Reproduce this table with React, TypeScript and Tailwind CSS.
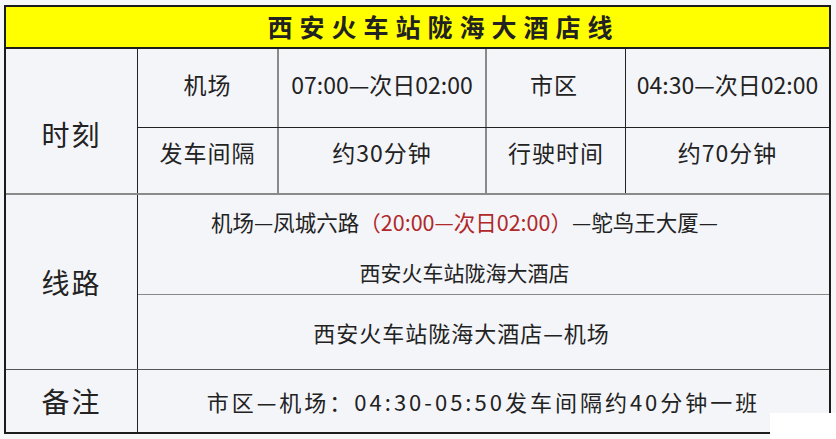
import React from 'react'

const font = { fontFamily: '"Noto Sans CJK SC", "Noto Sans", sans-serif' }

export default function App() {
  return (
    <div className="relative h-[439px] w-[836px] overflow-hidden bg-[#f6f7f9] text-[#222]" style={font}>
      <div className="pl-[4px] pt-[5px]">
        <div className="w-[827px] border-2 border-[#1c1c1c] bg-[#f4f5f9]">
          {/* title */}
          <div className="flex h-[42px] items-center justify-center border-b-2 border-[#1c1c1c] bg-[#ffff00] pl-[52px] text-[25px] font-bold tracking-[7px]">
            西安火车站陇海大酒店线
          </div>

          {/* 时刻 */}
          <div className="flex h-[146px] border-b-2 border-[#8a8a8a]">
            <div className="flex w-[132px] items-center justify-center border-r border-[#222] pt-[26px] text-[28px] tracking-[2px]">
              时刻
            </div>
            <div className="flex flex-1 flex-col">
              <div className="flex h-[79px] border-b border-[#222] text-[23px]">
                <div className="flex w-[141px] items-center justify-center border-r-2 border-[#8a8a8a] pb-[7px] tracking-[1px]">机场</div>
                <div className="flex w-[208px] items-center justify-center border-r-2 border-[#8a8a8a] pb-[7px]">07:00—次日02:00</div>
                <div className="flex w-[139px] items-center justify-center border-r border-[#222] pb-[7px] pr-[4px] tracking-[1px]">市区</div>
                <div className="flex flex-1 items-center justify-center pb-[7px]">04:30—次日02:00</div>
              </div>
              <div className="flex flex-1 text-[23px]">
                <div className="flex w-[141px] items-center justify-center border-r-2 border-[#8a8a8a] pb-[16px] tracking-[1px]">发车间隔</div>
                <div className="flex w-[208px] items-center justify-center border-r-2 border-[#8a8a8a] pb-[16px] tracking-[1px]">约30分钟</div>
                <div className="flex w-[139px] items-center justify-center border-r border-[#222] pb-[16px] tracking-[1px]">行驶时间</div>
                <div className="flex flex-1 items-center justify-center pb-[16px] tracking-[1px]">约70分钟</div>
              </div>
            </div>
          </div>

          {/* 线路 */}
          <div className="flex h-[175px] border-b border-[#555]">
            <div className="flex w-[132px] items-center justify-center border-r border-[#222] text-[28px] tracking-[2px]">
              线路
            </div>
            <div className="flex flex-1 flex-col">
              <div className="flex h-[100px] flex-col items-center border-b border-[#888] pr-[38px] pt-[13px] leading-[28px]">
                <div className="text-[21.5px]">
                  机场—凤城六路<span className="text-[#b0282a]">（20:00—次日02:00）</span>—鸵鸟王大厦—
                </div>
                <div className="mt-[22px] text-[21px]">西安火车站陇海大酒店</div>
              </div>
              <div className="flex flex-1 items-center justify-center pr-[44px] text-[22px] tracking-[1px]">西安火车站陇海大酒店—机场</div>
            </div>
          </div>

          {/* 备注 */}
          <div className="flex h-[62px]">
            <div className="flex w-[132px] items-center justify-center border-r border-[#222] text-[28px] tracking-[2px]">
              备注
            </div>
            <div className="flex flex-1 items-center justify-center text-[22px] tracking-[3px]">
              市区—机场：04:30-05:50发车间隔约40分钟一班
            </div>
          </div>
        </div>
      </div>
      <div className="absolute left-[770px] top-[413px] h-[26px] w-[66px] bg-white" />
    </div>
  )
}
